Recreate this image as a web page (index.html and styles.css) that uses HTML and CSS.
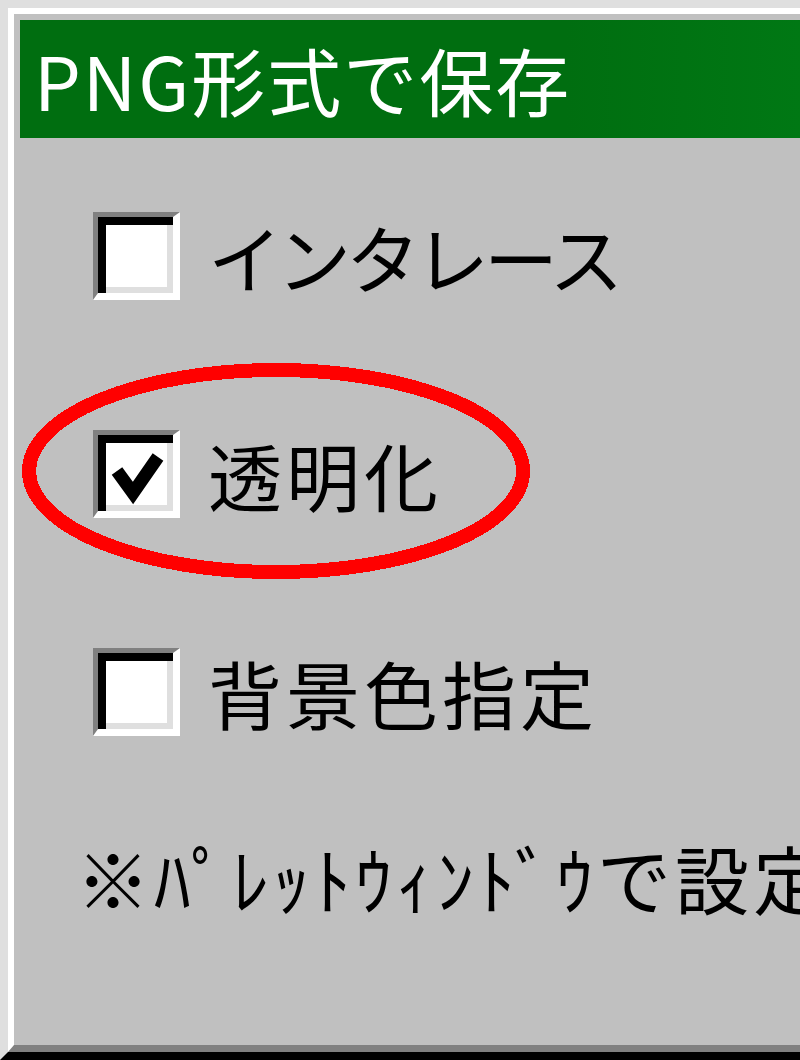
FILE: index.html
```html
<!DOCTYPE html>
<html lang="ja">
<head>
<meta charset="utf-8">
<title>PNG形式で保存</title>
<link rel="stylesheet" href="styles.css">
</head>
<body>
<div class="outer">
  <div class="inner">
    <div class="face">
      <div class="titlebar"><span class="title">PNG形式で保存</span></div>
      <div class="options">
        <div class="row">
          <span class="cb"></span>
          <span class="label narrow">インタレース</span>
        </div>
        <div class="row">
          <span class="cb">
            <svg class="check" viewBox="0 0 73 74" width="73" height="74"><polyline points="19,36 35,58 60,22" fill="none" stroke="#000" stroke-width="13" stroke-linejoin="miter"/></svg>
          </span>
          <span class="label">透明化</span>
        </div>
        <div class="row">
          <span class="cb"></span>
          <span class="label">背景色指定</span>
        </div>
      </div>
      <div class="note">※ﾊﾟﾚｯﾄｳｨﾝﾄﾞｳで設定</div>
      <svg class="mark" viewBox="0 0 530 240" width="530" height="240"><ellipse cx="262" cy="116" rx="247" ry="101" fill="none" stroke="#ff0000" stroke-width="14" shape-rendering="crispEdges"/></svg>
    </div>
  </div>
</div>
</body>
</html>
```

FILE: styles.css
```css
html, body {
  margin: 0;
  padding: 0;
  width: 800px;
  height: 1060px;
  overflow: hidden;
}

body {
  font-family: "Noto Sans CJK JP", "Noto Sans", sans-serif;
  background: #dfdfdf;
}

.outer {
  box-sizing: border-box;
  height: 1060px;
  border-style: solid;
  border-width: 8px 0 8px 8px;
  border-color: #dfdfdf #000 #000 #dfdfdf;
}

.inner {
  box-sizing: border-box;
  height: 100%;
  border-style: solid;
  border-width: 6px 0 7px 6px;
  border-color: #fff #808080 #808080 #fff;
}

.face {
  position: relative;
  box-sizing: border-box;
  height: 100%;
  background: #c0c0c0;
  padding: 6px 0 0 6px;
  overflow: hidden;
}

.titlebar {
  height: 118px;
  background: linear-gradient(to right, #006e10 0%, #006e10 70%, #007814 100%);
  display: flex;
  align-items: center;
  padding-left: 14px;
}

.title {
  color: #fff;
  font-size: 74px;
  line-height: 1;
  letter-spacing: 2px;
  white-space: nowrap;
}

.options {
  display: flex;
  flex-direction: column;
  gap: 130px;
  margin-top: 74px;
  padding-left: 73px;
}

.row {
  display: flex;
  align-items: center;
  gap: 28px;
  height: 88px;
}

.cb {
  position: relative;
  box-sizing: border-box;
  width: 87px;
  height: 88px;
  flex: none;
  border-style: solid;
  border-width: 5px 7px 7px 5px;
  border-color: #808080 #fff #fff #808080;
  background: #fff;
  box-shadow: inset 8px 8px 0 #000, inset -6px -6px 0 #dfdfdf;
}

.check {
  display: block;
}

.label {
  font-size: 74px;
  line-height: 1;
  letter-spacing: 4px;
  color: #000;
  white-space: nowrap;
}

.label.narrow {
  letter-spacing: -5px;
}

.note {
  margin-top: 104px;
  padding-left: 56px;
  font-size: 74px;
  line-height: 1;
  letter-spacing: 4px;
  color: #000;
  white-space: nowrap;
}

.mark {
  position: absolute;
  left: 0;
  top: 341px;
}
```
